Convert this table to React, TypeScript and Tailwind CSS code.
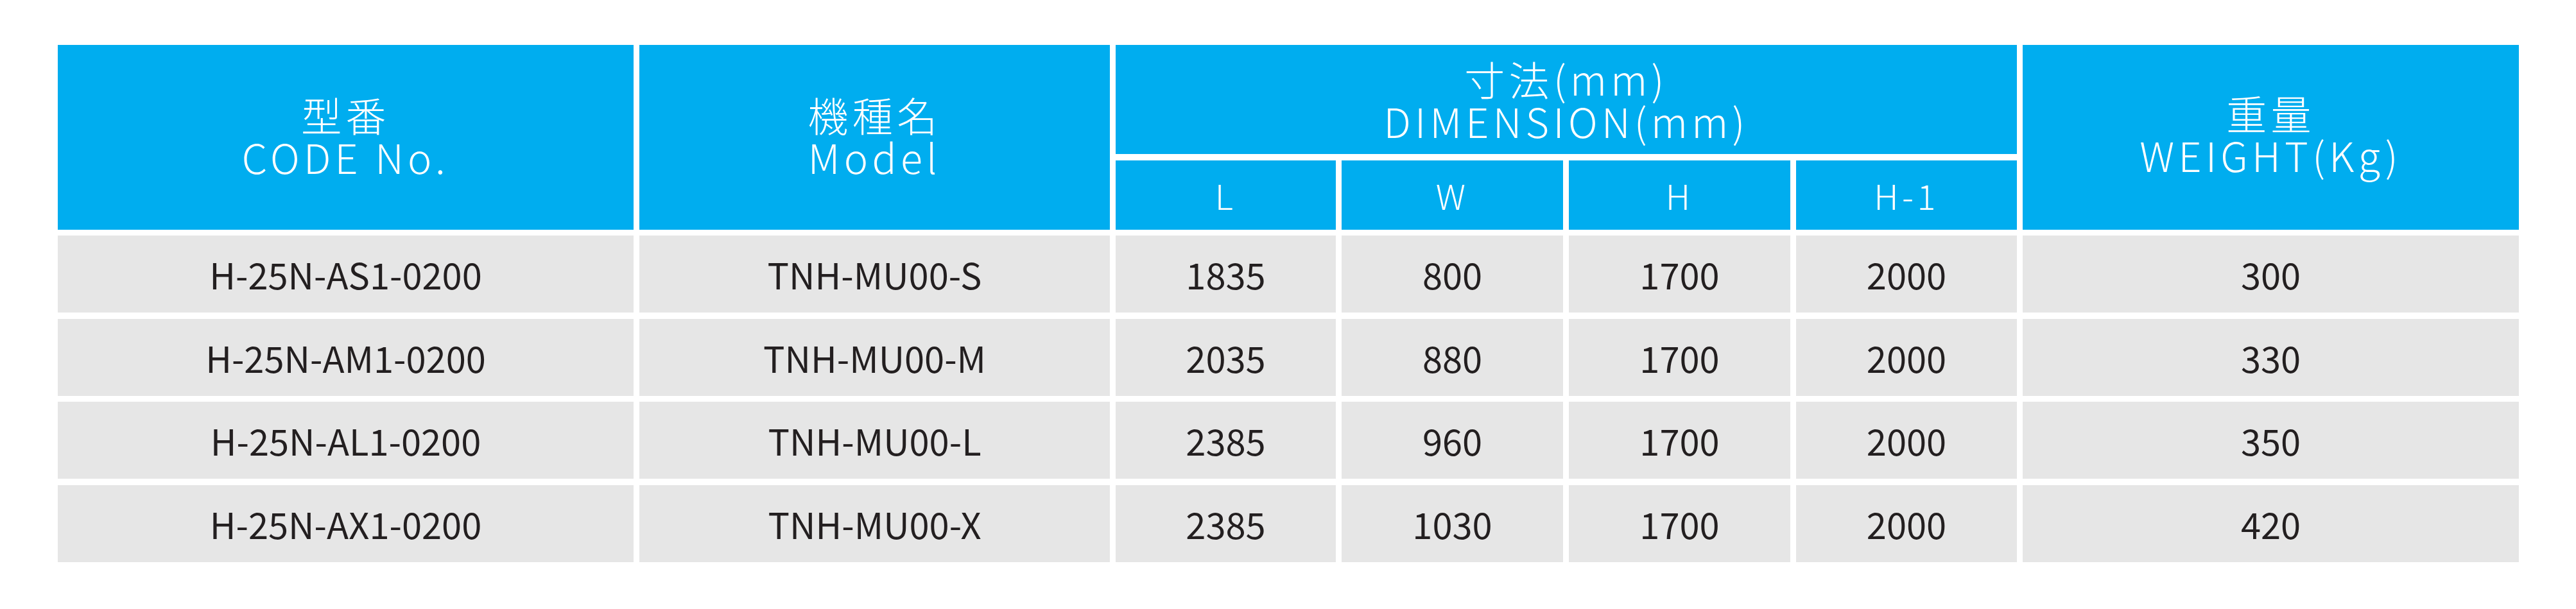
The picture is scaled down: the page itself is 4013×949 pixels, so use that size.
import React from "react";

const rows = [
  ["H-25N-AS1-0200", "TNH-MU00-S", "1835", "800", "1700", "2000", "300"],
  ["H-25N-AM1-0200", "TNH-MU00-M", "2035", "880", "1700", "2000", "330"],
  ["H-25N-AL1-0200", "TNH-MU00-L", "2385", "960", "1700", "2000", "350"],
  ["H-25N-AX1-0200", "TNH-MU00-X", "2385", "1030", "1700", "2000", "420"],
];

const font = { fontFamily: '"Noto Sans CJK JP", "Noto Sans", sans-serif' };

const App: React.FC = () => {
  return (
    <div className="w-[4013px] h-[949px] bg-white pl-[90px] pt-[70px]" style={font}>
      <div className="grid grid-cols-[897px_733px_343px_345px_345px_344px_773px] grid-rows-[170px_108px_120px_120px_120px_120px] gap-x-[9px] gap-y-[9.5px]">
        {/* Header */}
        <div className="row-span-2 bg-[#00adef] text-white flex flex-col items-center justify-center text-[63px] leading-[66px] font-light tracking-[0.1em] pb-[6px]">
          <span className="block">型番</span>
          <span className="block">CODE No.</span>
        </div>
        <div className="row-span-2 bg-[#00adef] text-white flex flex-col items-center justify-center text-[63px] leading-[66px] font-light tracking-[0.1em] pb-[6px]">
          <span className="block">機種名</span>
          <span className="block">Model</span>
        </div>
        <div className="col-span-4 bg-[#00adef] text-white flex flex-col items-center justify-center text-[63px] leading-[66px] font-light tracking-[0.1em]">
          <span className="block">寸法(mm)</span>
          <span className="block">DIMENSION(mm)</span>
        </div>
        <div className="row-span-2 bg-[#00adef] text-white flex flex-col items-center justify-center text-[63px] leading-[66px] font-light tracking-[0.1em] pb-[12px]">
          <span className="block">重量</span>
          <span className="block">WEIGHT(Kg)</span>
        </div>
        {["L", "W", "H", "H-1"].map((s) => (
          <div
            key={s}
            className="bg-[#00adef] text-white flex items-center justify-center text-[54px] font-light tracking-[0.1em]"
          >
            {s}
          </div>
        ))}

        {/* Body */}
        {rows.map((r, i) =>
          r.map((c, j) => (
            <div
              key={i + "-" + j}
              className="bg-[#e6e6e6] text-[#231f20] flex items-center justify-center text-[56px]"
            >
              {c}
            </div>
          ))
        )}
      </div>
    </div>
  );
};

export default App;
